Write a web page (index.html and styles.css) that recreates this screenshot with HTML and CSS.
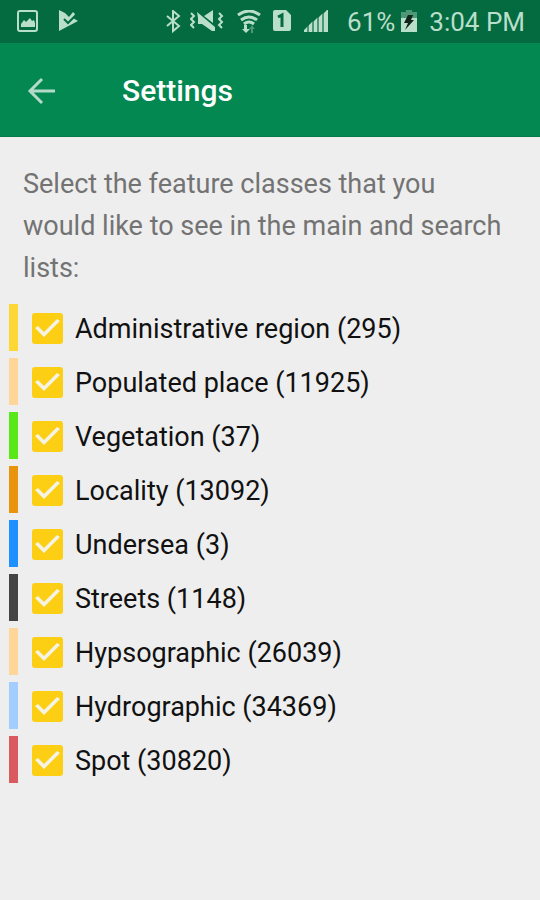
FILE: index.html
```html
<!DOCTYPE html>
<html lang="en">
<head>
    <meta charset="UTF-8">
    <meta name="viewport" content="width=device-width, initial-scale=1.0">
    <title>Settings</title>
    <link rel="stylesheet" href="styles.css">
</head>
<body>
    <div class="status-bar">
        <div class="notifications">
            <svg width="22" height="24" viewBox="0 0 22 24">
                <rect x="1" y="1" width="19" height="20" rx="2" fill="none" stroke="currentColor" stroke-width="2"/>
                <path d="M4 17v-3l3-4 2 2 4-4 2 3 2-1 1 3v4z" fill="currentColor"/>
            </svg>
            <svg width="20" height="24" viewBox="0 0 20 24">
                <path d="M1 0l6 3 4 4 4-5 2 2-2 4 5 3-19 10z" fill="currentColor"/>
                <path d="M6 9l4 4 7-7" fill="none" stroke="#046a40" stroke-width="2"/>
            </svg>
        </div>
        <div class="system">
            <svg width="16" height="24" viewBox="0 0 16 24">
                <path d="M2 6l12 10-6 5V1l6 5L2 16" fill="none" stroke="currentColor" stroke-width="2"/>
            </svg>
            <svg class="vibrate" width="34" height="24" viewBox="0 0 34 24">
                <path d="M1 3l3 3-3 3 3 3-3 3 3 3M29 3l3 3-3 3 3 3-3 3 3 3" fill="none" stroke="currentColor" stroke-width="2"/>
                <path d="M7 2l6 5 12 10v4h-3L12 14H8V8zM14 6l9-6v13z" fill="currentColor"/>
            </svg>
            <svg class="wifi" width="26" height="24" viewBox="0 0 26 24">
                <path d="M2 5q11-8 22 0M5 10q8-6 16 0M8 14q5-4 10 0" fill="none" stroke="currentColor" stroke-width="3"/>
                <path d="M8 15h3v4h3l-4 4-4-4h2z" fill="currentColor"/>
                <path d="M15 23v-4h-2l3-4 3 4h-2v4z" fill="currentColor" opacity="0.4"/>
            </svg>
            <svg class="sim" width="20" height="24" viewBox="0 0 20 24">
                <path d="M3 0h11l5 5v14q0 2-2 2H3q-2 0-2-2V2q0-2 2-2z" fill="currentColor"/>
                <path d="M6 7l4-2v12" fill="none" stroke="#046a40" stroke-width="3"/>
            </svg>
            <svg class="signal" width="25" height="24" viewBox="0 0 25 24">
                <path d="M0 22v-2l3-3v5zM5 22v-7l3-3v10zM10 22V11l3-3v14zM15 22V7l3-3v18zM20 22V3l4-4v23z" fill="currentColor"/>
                <path d="M3 22v-5l2-2v7zM8 22V12l2-1v11zM13 22V8l2-1v15zM18 22V4l2-1v19z" fill="currentColor" opacity="0.4"/>
            </svg>
            <span>61%</span>
            <svg class="battery" width="18" height="24" viewBox="0 0 18 24">
                <path d="M1 8V2h5V0h6v2h5v6z" fill="currentColor" opacity="0.4"/>
                <path d="M1 8h16v14H1z" fill="currentColor"/>
                <path d="M8 5h5l-2 5h3L5 20l3-7H4z" fill="#10241a"/>
            </svg>
            <span>3:04 PM</span>
        </div>
    </div>

    <header class="toolbar">
        <button class="back" aria-label="Back">
            <svg width="28" height="28" viewBox="0 0 28 28">
                <path d="M15 2L3 14l12 12M3 14h25" fill="none" stroke="currentColor" stroke-width="3"/>
            </svg>
        </button>
        <h1>Settings</h1>
    </header>

    <main>
        <p class="intro">Select the feature classes that you would like to see in the main and search lists:</p>
        <ul class="classes">
            <li class="administrative"><label><input type="checkbox" checked>Administrative region (295)</label></li>
            <li class="populated"><label><input type="checkbox" checked>Populated place (11925)</label></li>
            <li class="vegetation"><label><input type="checkbox" checked>Vegetation (37)</label></li>
            <li class="locality"><label><input type="checkbox" checked>Locality (13092)</label></li>
            <li class="undersea"><label><input type="checkbox" checked>Undersea (3)</label></li>
            <li class="streets"><label><input type="checkbox" checked>Streets (1148)</label></li>
            <li class="hypsographic"><label><input type="checkbox" checked>Hypsographic (26039)</label></li>
            <li class="hydrographic"><label><input type="checkbox" checked>Hydrographic (34369)</label></li>
            <li class="spot"><label><input type="checkbox" checked>Spot (30820)</label></li>
        </ul>
    </main>
</body>
</html>
```
FILE: styles.css
```css
* {
    box-sizing: border-box;
}
body {
    font-family: Roboto, sans-serif;
    background-color: #eeeeee;
    margin: 0;
    padding: 0;
}
svg {
    display: block;
    flex-shrink: 0;
}
.status-bar {
    display: flex;
    justify-content: space-between;
    align-items: center;
    height: 43px;
    padding: 0 15px 0 17px;
    background: #046a40;
    color: #b9dfca;
    font-size: 26px;
}
.notifications {
    display: flex;
    gap: 19px;
}
.system {
    display: flex;
    align-items: center;
    white-space: nowrap;
}
.vibrate {
    margin-left: 9px;
}
.wifi {
    margin-left: 12px;
}
.sim {
    margin-left: 10px;
}
.signal {
    margin: 0 18px 0 12px;
}
.battery {
    margin: 0 11px 0 5px;
}
.toolbar {
    display: flex;
    align-items: center;
    height: 94px;
    padding: 2px 27px 0;
    background: #048852;
    border-bottom: 1px solid #037a48;
}
.back {
    display: block;
    width: 28px;
    padding: 0;
    border: none;
    background: none;
    color: #b4dbc9;
    cursor: pointer;
}
h1 {
    margin: 0 0 0 67px;
    color: white;
    font-size: 30px;
    font-weight: 500;
}
.intro {
    margin: 0;
    padding: 26px 32px 0 23px;
    color: #737373;
    font-size: 27px;
    line-height: 42px;
}
.classes {
    display: flex;
    flex-direction: column;
    gap: 7px;
    margin: 15px 9px;
    padding: 0;
    list-style: none;
}
.classes li {
    border-left-width: 9px;
    border-left-style: solid;
}
.classes label {
    display: flex;
    align-items: center;
    gap: 12px;
    height: 47px;
    padding: 2px 0 0 14px;
    color: #111111;
    font-size: 27px;
    cursor: pointer;
}
input {
    appearance: none;
    width: 31px;
    height: 31px;
    margin: 0;
    border-radius: 3px;
    background: #999999;
}
input:checked {
    background: #fccf14;
}
input:checked::before {
    content: "";
    display: block;
    width: 31px;
    height: 31px;
    background: #f5f3e6;
    clip-path: polygon(3px 15px, 6px 13px, 12px 19px, 25px 6px, 28px 8px, 12px 24px);
}
.administrative {
    border-color: #fdd835;
}
.populated,
.hypsographic {
    border-color: #ffd699;
}
.vegetation {
    border-color: #59e817;
}
.locality {
    border-color: #e8940c;
}
.undersea {
    border-color: #1e90ff;
}
.streets {
    border-color: #444444;
}
.hydrographic {
    border-color: #a3cdff;
}
.spot {
    border-color: #d95b60;
}
```
